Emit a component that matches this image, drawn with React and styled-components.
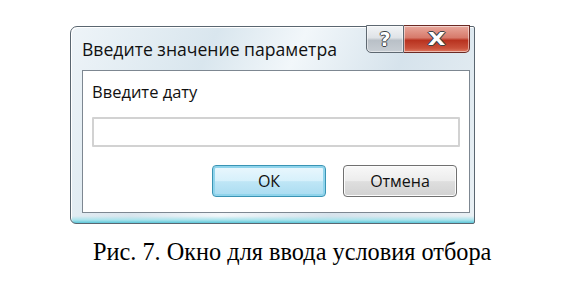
import React from "react";
import styled, { createGlobalStyle } from "styled-components";

const Global = createGlobalStyle`
  html, body {
    margin: 0;
    padding: 0;
    background: #ffffff;
  }
`;

function App() {
  return (
    <Page>
      <Global />
      <Window>
        <TitleBar>
          <Title>Введите значение параметра</Title>
          <Controls>
            <CaptionButton kind="help">
              <Glyph>?</Glyph>
            </CaptionButton>
            <CaptionButton kind="close">
              <Glyph wide>X</Glyph>
            </CaptionButton>
          </Controls>
        </TitleBar>
        <Client>
          <Label>Введите дату</Label>
          <Input type="text" />
          <ButtonRow>
            <Button primary>ОК</Button>
            <Button>Отмена</Button>
          </ButtonRow>
        </Client>
      </Window>
      <Caption>Рис. 7. Окно для ввода условия отбора</Caption>
    </Page>
  );
}

const Page = styled.div`
  width: 576px;
  height: 288px;
  box-sizing: border-box;
  padding: 26px 0 0 70px;
`;

const Window = styled.div`
  width: 405px;
  height: 198px;
  box-sizing: border-box;
  padding: 0 4px 10px 11px;
  display: flex;
  flex-direction: column;
  border: 1px solid #5a6670;
  border-radius: 7px 2px 2px 6px;
  background:
    linear-gradient(to top, #5cc6d8 0px, #a9e3ec 3px, rgba(255, 255, 255, 0) 7px),
    linear-gradient(115deg, #eef4f8 0%, #d9e6ee 30%, #f2f7fa 48%, #d6e3ec 70%, #eaf1f5 100%);
  box-shadow: inset 1px 1px 0 #ffffff;
`;

const TitleBar = styled.div`
  height: 43px;
  display: flex;
  align-items: flex-start;
  justify-content: space-between;
`;

const Title = styled.div`
  margin-top: 10px;
  font-family: "Open Sans", "Noto Sans", sans-serif;
  font-size: 17.6px;
  color: #111;
`;

const Controls = styled.div`
  display: flex;
  margin-top: -2px;
`;

const CaptionButton = styled.div`
  width: ${(p) => (p.kind === "close" ? "66px" : "38px")};
  height: 28px;
  box-sizing: border-box;
  display: flex;
  align-items: center;
  justify-content: center;
  border: 1px solid ${(p) => (p.kind === "close" ? "#6b2a24" : "#5e6871")};
  border-left: ${(p) => (p.kind === "close" ? "none" : "1px solid #5e6871")};
  border-radius: ${(p) => (p.kind === "close" ? "0 0 5px 0" : "0 0 0 5px")};
  background: ${(p) =>
    p.kind === "close"
      ? "linear-gradient(to bottom, #e8a89c 0%, #d77a6b 45%, #b8321f 55%, #c9503a 85%, #e07a62 100%)"
      : "linear-gradient(to bottom, #f2f4f6 0%, #dfe3e7 45%, #b9c0c7 55%, #c7cdd3 100%)"};
  box-shadow: inset 0 0 0 1px rgba(255, 255, 255, 0.5);
`;

const Glyph = styled.span`
  font-family: "DejaVu Sans", sans-serif;
  font-weight: bold;
  font-size: ${(p) => (p.wide ? "17px" : "19px")};
  line-height: 1;
  color: #ffffff;
  transform: ${(p) => (p.wide ? "scaleX(1.35)" : "none")};
  text-shadow:
    1px 0 0 #3c4248,
    -1px 0 0 #3c4248,
    0 1px 0 #3c4248,
    0 -1px 0 #3c4248;
`;

const Client = styled.div`
  flex: 1;
  background: #ffffff;
  border: 1px solid #7d8791;
  display: flex;
  flex-direction: column;
  padding: 10px 10px 0 9px;
`;

const Label = styled.div`
  font-family: "Open Sans", "Noto Sans", sans-serif;
  font-size: 16.5px;
  color: #111;
  height: 22px;
  line-height: 22px;
`;

const Input = styled.input`
  margin-top: 14px;
  height: 30px;
  width: 368px;
  box-sizing: border-box;
  border: 2px solid #d2d2d2;
  border-radius: 1px;
  background: #ffffff;
  outline: none;
`;

const ButtonRow = styled.div`
  margin-top: 18px;
  display: flex;
  justify-content: flex-end;
  gap: 17px;
  padding-right: 2px;
`;

const Button = styled.button`
  width: 114px;
  height: 32px;
  box-sizing: border-box;
  font-family: "Open Sans", "Noto Sans", sans-serif;
  font-size: 16px;
  color: #111;
  border-radius: 4px;
  border: 1px solid ${(p) => (p.primary ? "#3a94b4" : "#707070")};
  background: ${(p) =>
    p.primary
      ? "linear-gradient(to bottom, #eaf7fd 0%, #d6f0fb 50%, #bfe6f6 52%, #a9dcf1 100%)"
      : "linear-gradient(to bottom, #f8f8f8 0%, #ececec 50%, #dedede 52%, #d2d2d2 100%)"};
  box-shadow: ${(p) =>
    p.primary ? "inset 0 0 0 2px #8fd4ec" : "inset 0 0 0 1px #fcfcfc"};
  padding: 0;
`;

const Caption = styled.div`
  margin-top: 14px;
  margin-left: 23px;
  font-family: "Liberation Serif", "Times New Roman", serif;
  font-size: 24.3px;
  color: #000;
`;

export default App;
